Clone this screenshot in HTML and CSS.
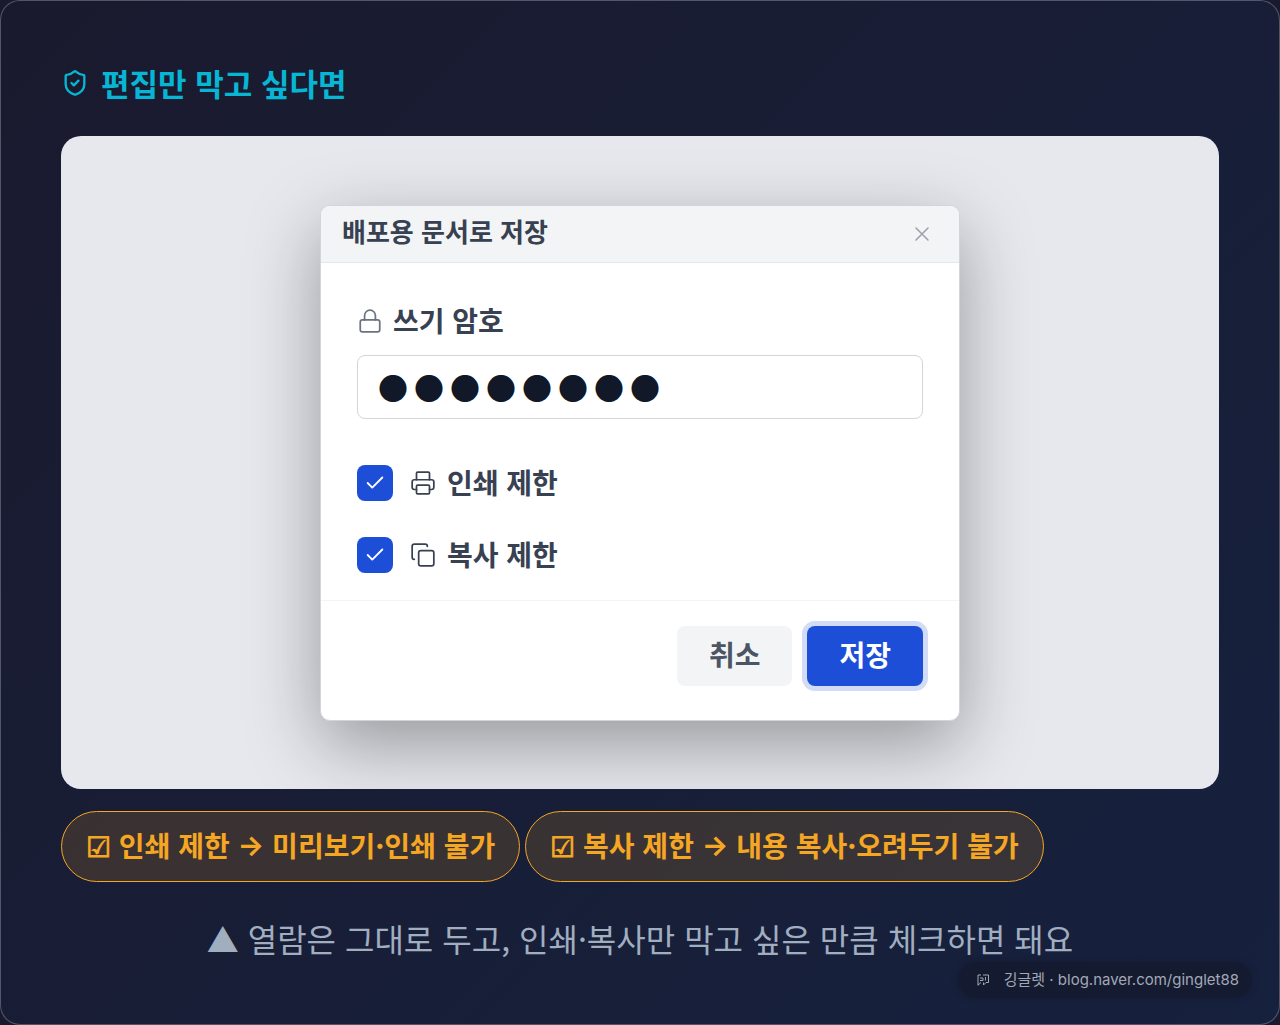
FILE: index.html
```html
<!DOCTYPE html>
<html lang="ko">
<head>
<meta charset="utf-8">
<meta name="viewport" content="width=device-width, initial-scale=1">
<title>편집만 막고 싶다면</title>
<link rel="stylesheet" href="styles.css">
</head>
<body>
<main class="card">
  <h1 class="heading">
    <svg class="icon-shield" viewBox="0 0 24 24" aria-hidden="true"><path d="M20 13c0 5-3.500 7.500-7.660 8.950a1 1 0 0 1-.67-.01C7.500 20.500 4 18 4 13V6a1 1 0 0 1 1-1c2 0 4.500-1.200 6.240-2.720a1.170 1.170 0 0 1 1.520 0C14.510 3.810 17 5 19 5a1 1 0 0 1 1 1z"/><path d="m9 12 2 2 4-4"/></svg>
    <span>편집만 막고 싶다면</span>
  </h1>

  <section class="stage">
    <form class="dialog" role="dialog" aria-labelledby="dialog-title">
      <header class="dialog-head">
        <h2 class="dialog-title" id="dialog-title">배포용 문서로 저장</h2>
        <button class="close" type="button" aria-label="닫기">
          <svg class="icon-close" viewBox="0 0 24 24" aria-hidden="true"><path d="M18 6 6 18M6 6l12 12"/></svg>
        </button>
      </header>
      <div class="dialog-body">
        <label class="field-label" for="write-password">
          <svg class="icon" viewBox="0 0 24 24" aria-hidden="true"><rect x="3" y="11" width="18" height="11" rx="2"/><path d="M7 11V7a5 5 0 0 1 10 0v4"/></svg>
          <span class="label-text">쓰기 암호</span>
        </label>
        <input class="field" id="write-password" type="text" autocomplete="off" value="●●●●●●●●">
        <div class="options">
          <label class="option">
            <span class="tick"><input class="tick-input" type="checkbox" checked><svg class="tick-mark" viewBox="0 0 24 24" aria-hidden="true"><path d="M20 6 9 17l-5-5"/></svg></span>
            <svg class="icon" viewBox="0 0 24 24" aria-hidden="true"><path d="M6 18H4a2 2 0 0 1-2-2v-5a2 2 0 0 1 2-2h16a2 2 0 0 1 2 2v5a2 2 0 0 1-2 2h-2"/><path d="M6 9V3a1 1 0 0 1 1-1h10a1 1 0 0 1 1 1v6"/><rect x="6" y="14" width="12" height="8" rx="1"/></svg>
            <span class="label-text">인쇄 제한</span>
          </label>
          <label class="option">
            <span class="tick"><input class="tick-input" type="checkbox" checked><svg class="tick-mark" viewBox="0 0 24 24" aria-hidden="true"><path d="M20 6 9 17l-5-5"/></svg></span>
            <svg class="icon" viewBox="0 0 24 24" aria-hidden="true"><rect x="8" y="8" width="14" height="14" rx="2"/><path d="M4 16c-1.100 0-2-.9-2-2V4c0-1.100.9-2 2-2h10c1.100 0 2 .9 2 2"/></svg>
            <span class="label-text">복사 제한</span>
          </label>
        </div>
      </div>
      <footer class="dialog-foot">
        <button class="button" type="button">취소</button>
        <button class="button button-primary" type="button">저장</button>
      </footer>
    </form>
  </section>

  <div class="chips">
    <span class="chip">☑ 인쇄 제한 <span class="symbol">→</span> 미리보기·인쇄 불가</span>
    <span class="chip">☑ 복사 제한 <span class="symbol">→</span> 내용 복사·오려두기 불가</span>
  </div>

  <p class="caption">▲ 열람은 그대로 두고, 인쇄·복사만 막고 싶은 만큼 체크하면 돼요</p>

  <div class="credit">
    <svg class="credit-mark" viewBox="0 0 14 14" aria-hidden="true"><path d="M2 12.500V2H5M7 2h5.500V9.500H10L7.500 12V9.500M2 12l3-2.500M4 5h3v2.500H4M9.500 4v3.500"/></svg>
    <span>깅글렛 · blog.naver.com/ginglet88</span>
  </div>
</main>
</body>
</html>
```
FILE: styles.css
```css
* {
  box-sizing: border-box;
}

body {
  margin: 0;
  background: #1a1a2e;
  color: #374151;
  font-family: "Noto Sans CJK KR", sans-serif;
}

.card {
  position: relative;
  min-height: 100vh;
  padding: 60px;
  border: 1px solid rgba(255, 255, 255, 0.25);
  border-radius: 20px;
  background: linear-gradient(135deg, #1a1a2e 0%, #16213e 100%);
}

.heading {
  display: flex;
  align-items: center;
  gap: 12px;
  margin: 0 0 32px;
  color: #06b6d4;
  font-size: 31px;
  font-weight: 700;
  line-height: 43px;
}

.icon,
.icon-shield,
.icon-close,
.tick-mark {
  flex: none;
  fill: none;
  stroke: currentColor;
  stroke-width: 2;
  stroke-linecap: round;
  stroke-linejoin: round;
}

.icon-shield {
  width: 28px;
  height: 28px;
}

.icon {
  width: 26px;
  height: 26px;
  stroke-width: 1.6;
}

.icon-close {
  display: block;
  width: 24px;
  height: 24px;
  stroke-width: 1.6;
}

.stage {
  display: flex;
  justify-content: center;
  padding: 69px 20px 68px;
  overflow: hidden;
  border-radius: 20px;
  background: #e7e8ee;
}

.dialog {
  width: 100%;
  max-width: 640px;
  overflow: hidden;
  border: 1px solid #d1d5db;
  border-radius: 10px;
  background: #fff;
  box-shadow: 0 24px 72px rgba(0, 0, 0, 0.35);
}

.dialog-head {
  display: flex;
  align-items: center;
  justify-content: space-between;
  padding: 0 25px 0 21px;
  border-bottom: 1px solid #e5e7eb;
  background: #f3f4f6;
}

.dialog-title {
  margin: 0;
  padding: 5px 0 11px;
  font-size: 26px;
  font-weight: 700;
  line-height: 40px;
}

.close {
  padding: 0;
  border: 0;
  background: none;
  color: #9ca3af;
}

.dialog-body {
  padding: 36px 36px 27px;
}

.field-label {
  display: flex;
  align-items: center;
  gap: 10px;
  margin-bottom: 12px;
  font-size: 28px;
  font-weight: 700;
  line-height: 44px;
}

.field-label .icon {
  color: #6b7280;
}

.label-text {
  padding-bottom: 2px;
  line-height: 42px;
}

.field {
  display: block;
  width: 100%;
  height: 64px;
  padding: 0 20px;
  border: 1px solid #d1d5db;
  border-radius: 8px;
  background: #fff;
  color: #111827;
  font: 400 30px/60px "Noto Sans CJK KR", sans-serif;
  letter-spacing: 6px;
}

.options {
  display: grid;
  gap: 36px;
  margin-top: 46px;
}

.option {
  display: flex;
  align-items: center;
  gap: 11px;
  height: 36px;
  font-size: 28px;
  font-weight: 700;
}

.tick {
  display: grid;
  margin-right: 6px;
}

.tick-input,
.tick-mark {
  grid-area: 1 / 1;
  place-self: center;
}

.tick-input {
  width: 36px;
  height: 36px;
  margin: 0;
  appearance: none;
  border-radius: 8px;
  background: #1d4ed8;
}

.tick-mark {
  width: 22px;
  height: 22px;
  color: #fff;
  pointer-events: none;
}

.dialog-foot {
  display: flex;
  justify-content: flex-end;
  gap: 15px;
  padding: 25px 36px 34px;
  border-top: 1px solid #f3f4f6;
}

.button {
  padding: 0 32px 4px;
  border: 0;
  border-radius: 8px;
  background: #f3f4f6;
  color: #4b5563;
  font: 700 28px/56px "Noto Sans CJK KR", sans-serif;
}

.button-primary {
  background: #1d4ed8;
  color: #fff;
  box-shadow: 0 0 0 5px rgba(29, 78, 216, 0.2);
}

.chips {
  display: flex;
  flex-wrap: wrap;
  gap: 5px;
  margin-top: 22px;
}

.chip {
  padding: 11px 24px 14px;
  border: 1px solid #f5a623;
  border-radius: 36px;
  background: rgba(245, 166, 35, 0.15);
  color: #f5a623;
  font-size: 28px;
  font-weight: 700;
  line-height: 44px;
}

.symbol {
  font-family: Inter, sans-serif;
  line-height: 1;
  vertical-align: 2px;
}

.caption {
  margin: 32px 0 0;
  color: #a0aec0;
  font-size: 32px;
  line-height: 48px;
  text-align: center;
}

/* Author credit laid over the card's bottom corner. */
.credit {
  position: absolute;
  right: 27px;
  bottom: 26px;
  display: flex;
  align-items: center;
  gap: 14px;
  padding: 0 13px 0 18px;
  border-radius: 18px;
  background: rgba(20, 26, 44, 0.7);
  box-shadow: 0 0 6px rgba(20, 26, 44, 0.7);
  color: #a3a8b5;
  font: 400 15px/36px Inter, "Noto Sans CJK KR", sans-serif;
}

.credit-mark {
  width: 14px;
  height: 14px;
  fill: none;
  stroke: currentColor;
}
```
